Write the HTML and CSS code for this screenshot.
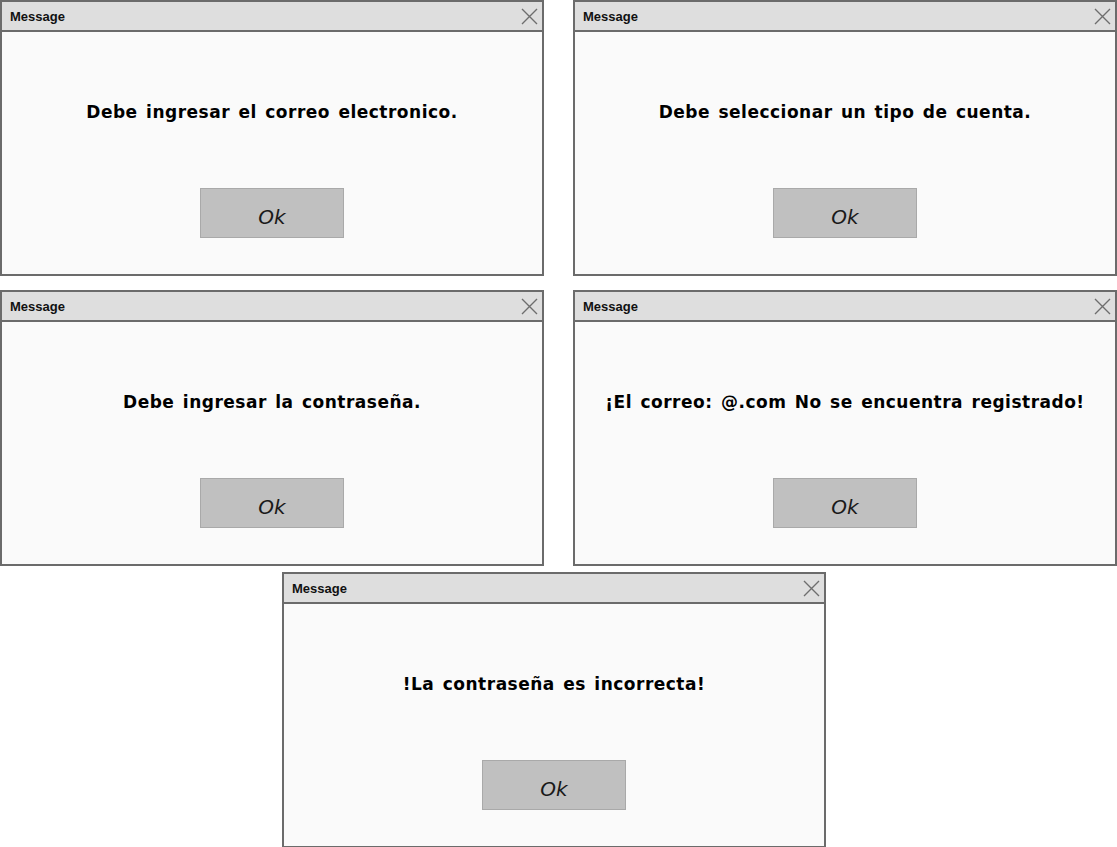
FILE: index.html
```html
<!DOCTYPE html>
<html lang="es">
<head>
<meta charset="utf-8">
<title>Messages</title>
<link rel="stylesheet" href="styles.css">
</head>
<body>
<div class="sheet">
  <div class="row row-top">
    <section class="dialog">
      <header class="title-bar"><span class="title">Message</span>
        <svg class="close" viewBox="0 0 17 17" width="17" height="17"><path d="M1 1 L16 16 M16 1 L1 16"/></svg>
      </header>
      <div class="body">
        <p class="msg">Debe ingresar el correo electronico.</p>
        <button class="ok">Ok</button>
      </div>
    </section>
    <section class="dialog">
      <header class="title-bar"><span class="title">Message</span>
        <svg class="close" viewBox="0 0 17 17" width="17" height="17"><path d="M1 1 L16 16 M16 1 L1 16"/></svg>
      </header>
      <div class="body">
        <p class="msg">Debe seleccionar un tipo de cuenta.</p>
        <button class="ok">Ok</button>
      </div>
    </section>
  </div>
  <div class="row row-mid">
    <section class="dialog">
      <header class="title-bar"><span class="title">Message</span>
        <svg class="close" viewBox="0 0 17 17" width="17" height="17"><path d="M1 1 L16 16 M16 1 L1 16"/></svg>
      </header>
      <div class="body">
        <p class="msg">Debe ingresar la contraseña.</p>
        <button class="ok">Ok</button>
      </div>
    </section>
    <section class="dialog">
      <header class="title-bar"><span class="title">Message</span>
        <svg class="close" viewBox="0 0 17 17" width="17" height="17"><path d="M1 1 L16 16 M16 1 L1 16"/></svg>
      </header>
      <div class="body">
        <p class="msg">¡El correo: @.com No se encuentra registrado!</p>
        <button class="ok">Ok</button>
      </div>
    </section>
  </div>
  <div class="row row-bottom">
    <section class="dialog">
      <header class="title-bar"><span class="title">Message</span>
        <svg class="close" viewBox="0 0 17 17" width="17" height="17"><path d="M1 1 L16 16 M16 1 L1 16"/></svg>
      </header>
      <div class="body">
        <p class="msg">!La contraseña es incorrecta!</p>
        <button class="ok">Ok</button>
      </div>
    </section>
  </div>
</div>
</body>
</html>
```
FILE: styles.css
```css
html, body {
  margin: 0;
  padding: 0;
  background: #ffffff;
}

.sheet {
  width: 1117px;
  display: flex;
  flex-direction: column;
}

.row {
  display: flex;
  gap: 29px;
}

.row-mid {
  margin-top: 14px;
}

.row-bottom {
  margin-top: 6px;
  padding-left: 282px;
}

.dialog {
  box-sizing: border-box;
  width: 544px;
  height: 276px;
  border: 2px solid #6b6b6b;
  background: #fafafa;
  display: flex;
  flex-direction: column;
}

.title-bar {
  height: 28px;
  border-bottom: 2px solid #6b6b6b;
  background: #dedede;
  display: flex;
  align-items: center;
  justify-content: space-between;
  padding: 0 4px 0 8px;
}

.title {
  font-family: "Liberation Sans", Arial, sans-serif;
  font-weight: bold;
  font-size: 13px;
  color: #111;
}

.close {
  display: block;
  fill: none;
  stroke: #6e6e6e;
  stroke-width: 1.4;
}

.body {
  flex: 1;
  display: flex;
  flex-direction: column;
  align-items: center;
  padding-top: 70px;
}

.msg {
  margin: 0;
  font-family: "DejaVu Sans", sans-serif;
  font-weight: bold;
  font-size: 17px;
  line-height: 21px;
  letter-spacing: 0.5px;
  word-spacing: 2px;
  color: #000;
}

.ok {
  margin-top: 65px;
  box-sizing: border-box;
  width: 144px;
  height: 50px;
  background: #c0c0c0;
  border: 1px solid #a9a9a9;
  font-family: "DejaVu Sans", sans-serif;
  font-style: italic;
  font-size: 20px;
  color: #1a1a1a;
  padding: 7px 0 0;
}
```
